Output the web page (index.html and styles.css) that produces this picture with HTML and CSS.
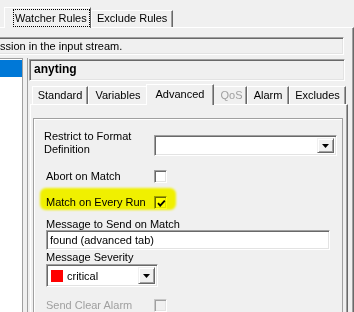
FILE: index.html
```html
<!DOCTYPE html>
<html>
<head>
<meta charset="utf-8">
<link rel="stylesheet" href="styles.css">
</head>
<body>
<div class="tabstrip">
  <div class="tab tab-sel"><span class="focus">Watcher Rules</span></div>
  <div class="tab">Exclude Rules</div>
</div>
<div class="page">
  <div class="expr">ssion in the input stream.</div>
  <div class="split">
    <div class="list"><div class="list-row"></div></div>
    <div class="detail">
      <div class="name">anyting</div>
      <div class="itabs">
        <div class="itab w-std">Standard</div>
        <div class="itab w-var">Variables</div>
        <div class="itab itab-sel w-adv">Advanced</div>
        <div class="itab w-qos disabled">QoS</div>
        <div class="itab w-alarm">Alarm</div>
        <div class="itab w-exc">Excludes</div>
      </div>
      <div class="ipage">
        <div class="group">
          <div class="row row-restrict">
            <div class="label label-2l">Restrict to Format<br>Definition</div>
            <div class="combo combo-wide">
              <div class="combo-text"></div>
              <div class="ddbtn"><svg width="7" height="4" viewBox="0 0 7 4"><path d="M0 0H7L3.5 4Z" fill="#000"/></svg></div>
            </div>
          </div>
          <div class="row row-check r-abort">
            <div class="label">Abort on Match</div>
            <div class="check"></div>
          </div>
          <div class="row row-check r-every">
            <div class="label">Match on Every Run</div>
            <div class="check"><svg width="9" height="9" viewBox="0 0 9 9"><path d="M1 4.2L3.2 6.6L7.8 1.6" fill="none" stroke="#000" stroke-width="1.8"/></svg></div>
            <div class="hl"></div>
          </div>
          <div class="caption c-msg">Message to Send on Match</div>
          <div class="textbox">found (advanced tab)</div>
          <div class="caption c-sev">Message Severity</div>
          <div class="combo combo-sev">
            <div class="combo-text"><span class="swatch"></span>critical</div>
            <div class="ddbtn"><svg width="7" height="4" viewBox="0 0 7 4"><path d="M0 0H7L3.5 4Z" fill="#000"/></svg></div>
          </div>
          <div class="row row-check r-clear disabled">
            <div class="label">Send Clear Alarm</div>
            <div class="check check-dis"></div>
          </div>
        </div>
      </div>
    </div>
  </div>
</div>
</body>
</html>
```
FILE: styles.css
```css
* { box-sizing: border-box; margin: 0; padding: 0; }
html, body { width: 354px; height: 312px; overflow: hidden; }
body {
  background: #f0f0f0;
  font: 11px "Liberation Sans", Arial, sans-serif;
  color: #000;
}

/* top tabs */
.tabstrip {
  display: flex;
  align-items: flex-end;
  height: 27px;
  padding-left: 4px;
  position: relative;
  z-index: 2;
}
.tab {
  height: 17px;
  padding: 0 5px;
  line-height: 15px;
  border: 1px solid;
  border-bottom: none;
  border-color: #fff #696969 transparent #fff;
  box-shadow: inset -1px 0 #a0a0a0;
  white-space: nowrap;
}
.tab-sel {
  width: 87px;
  height: 21px;
  margin-bottom: -1px;
  padding: 1px 0 0 8px;
  background: #f0f0f0;
  box-shadow: none;
}
.focus {
  display: block;
  width: 77px;
  height: 18px;
  border: 1px dotted #000;
  padding-left: 1px;
  line-height: 16px;
}

/* outer page */
.page {
  margin-left: -10px;
  width: 364px;
  height: 285px;
  border-top: 1px solid #fff;
  border-right: 1px solid #696969;
  box-shadow: inset -1px 0 #a0a0a0;
  overflow: hidden;
}
.expr, .name, .textbox, .combo, .check {
  border: 1px solid;
  border-color: #a0a0a0 #fff #fff #a0a0a0;
  box-shadow: inset 1px 1px #696969, inset -1px -1px #e3e3e3;
}
.expr {
  margin: 9px 9px 0 0;
  height: 18px;
  padding-left: 9px;
  line-height: 16px;
  white-space: nowrap;
  overflow: hidden;
}
.split {
  display: flex;
  margin-top: 3px;
  height: 254px;
}
.list {
  width: 33px;
  background: #fff;
  border-top: 1px solid #a0a0a0;
  border-right: 1px solid #a0a0a0;
}
.list-row {
  margin-top: 1px;
  height: 17px;
  background: #0078d7;
}
.detail {
  flex: 1;
  margin-left: 4px;
  border-left: 1px solid #a0a0a0;
  padding-top: 1px;
}
.name {
  margin: 0 8px 0 1px;
  height: 22px;
  padding-left: 4px;
  font-weight: bold;
  font-size: 12px;
  line-height: 19px;
}

/* inner tabs */
.itabs {
  display: flex;
  align-items: flex-end;
  height: 23px;
  padding-left: 4px;
  position: relative;
  z-index: 2;
}
.itab {
  height: 18px;
  border: 1px solid;
  border-bottom: none;
  border-color: #fff #696969 transparent #fff;
  box-shadow: inset -1px 0 #a0a0a0;
  text-align: center;
  line-height: 17px;
  white-space: nowrap;
}
.w-std { width: 56px; }
.w-var { width: 60px; }
.w-adv { width: 64px; }
.w-qos { width: 35px; padding-left: 4px; }
.w-alarm { width: 42px; }
.w-exc { width: 57px; }
.itab-sel {
  width: 68px;
  height: 21px;
  margin: 0 -2px -1px;
  line-height: 18px;
  background: #f0f0f0;
  position: relative;
  z-index: 1;
}
.disabled { color: #a0a0a0; }

.ipage {
  margin-left: 2px;
  width: 318px;
  height: 208px;
  border-top: 1px solid #fff;
  border-left: 1px solid #fff;
  border-right: 1px solid #696969;
  box-shadow: inset -1px 0 #a0a0a0;
}
.group {
  margin: 13px 0 0 2px;
  width: 310px;
  height: 194px;
  border: 1px solid #a0a0a0;
  border-bottom: none;
  box-shadow: inset 1px 1px #fff;
  padding-left: 10px;
}

/* form rows */
.row {
  display: flex;
  position: relative;
}
.row-restrict {
  margin-top: 16px;
  height: 21px;
  align-items: flex-start;
}
.label {
  width: 110px;
  line-height: 13px;
  white-space: nowrap;
}
.label-2l { margin-top: -5px; }
.row-check { height: 13px; }
.row-check .label { width: 108px; margin-left: 2px; }
.r-abort { margin-top: 14px; }
.r-every { margin-top: 13px; }
.r-clear { margin-top: 12px; }

.check {
  width: 13px;
  height: 13px;
  background: #fff;
  padding: 2px;
}
.check svg { display: block; }
.check-dis {
  background: #f0f0f0;
  border-color: #c8c8c8 #fff #fff #c8c8c8;
  box-shadow: inset 1px 1px #a0a0a0, inset -1px -1px #e3e3e3;
}
.hl {
  position: absolute;
  left: -4px;
  top: -8px;
  width: 136px;
  height: 22px;
  background: #ffff00;
  border-radius: 6px;
  filter: blur(0.8px);
  mix-blend-mode: multiply;
}

.caption {
  margin-left: 2px;
  line-height: 12px;
  white-space: nowrap;
}
.c-msg { margin-top: 9px; }
.c-sev { margin-top: 1px; }
.textbox {
  margin-left: 2px;
  width: 284px;
  height: 20px;
  background: #fff;
  padding-left: 3px;
  line-height: 18px;
}

.combo {
  display: flex;
  background: #fff;
  padding: 2px;
}
.combo-wide { width: 183px; height: 21px; }
.combo-sev { margin: 1px 0 0 2px; width: 112px; height: 23px; }
.combo-text {
  flex: 1;
  display: flex;
  align-items: center;
  white-space: nowrap;
}
.swatch {
  width: 12px;
  height: 12px;
  margin: 0 4px 0 2px;
  background: #ff0000;
}
.ddbtn {
  width: 17px;
  display: flex;
  align-items: center;
  justify-content: center;
  background: #f0f0f0;
  border: 1px solid;
  border-color: #f0f0f0 #696969 #696969 #f0f0f0;
  box-shadow: inset 1px 1px #fff, inset -1px -1px #a0a0a0;
}
.ddbtn svg { display: block; }
```
